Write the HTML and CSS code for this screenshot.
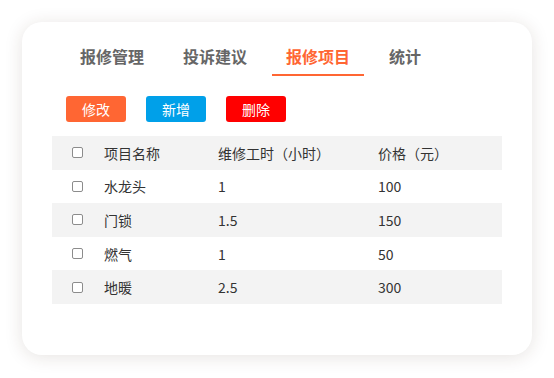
FILE: index.html
```html
<!DOCTYPE html>
<html>
<head>
    <title>报修项目</title>
    <link rel="stylesheet" href="styles.css">
</head>
<body>
    <div class="card">
        <div class="tabs">
            <span class="tab">报修管理</span>
            <span class="tab">投诉建议</span>
            <span class="tab active">报修项目</span>
            <span class="tab">统计</span>
        </div>

        <div class="actions">
            <button type="button" class="btn btn-edit">修改</button>
            <button type="button" class="btn btn-add">新增</button>
            <button type="button" class="btn btn-del">删除</button>
        </div>

        <div class="table">
            <div class="row head">
                <span class="cell"><i class="check"></i></span>
                <span class="cell">项目名称</span>
                <span class="cell">维修工时（小时）</span>
                <span class="cell">价格（元）</span>
            </div>
            <div class="row">
                <span class="cell"><i class="check"></i></span>
                <span class="cell">水龙头</span>
                <span class="cell">1</span>
                <span class="cell">100</span>
            </div>
            <div class="row">
                <span class="cell"><i class="check"></i></span>
                <span class="cell">门锁</span>
                <span class="cell">1.5</span>
                <span class="cell">150</span>
            </div>
            <div class="row">
                <span class="cell"><i class="check"></i></span>
                <span class="cell">燃气</span>
                <span class="cell">1</span>
                <span class="cell">50</span>
            </div>
            <div class="row">
                <span class="cell"><i class="check"></i></span>
                <span class="cell">地暖</span>
                <span class="cell">2.5</span>
                <span class="cell">300</span>
            </div>
        </div>
    </div>
</body>
</html>
```

FILE: styles.css
```css
body {
    font-family: "Noto Sans CJK SC", "Noto Sans", sans-serif;
    background-color: #fff;
    margin: 0;
    padding: 22px;
    color: #333;
}

.card {
    width: 450px;
    height: 319px;
    padding: 14px 30px 0;
    background-color: #fff;
    border-radius: 20px;
    box-shadow: 0 2px 18px rgba(60, 40, 20, 0.13);
}

.tabs {
    display: flex;
    padding-left: 14px;
}

.tab {
    height: 38px;
    line-height: 40px;
    padding: 0 14px;
    margin-right: 11px;
    font-size: 16px;
    font-weight: bold;
    color: #666;
    border-bottom: 2px solid transparent;
}

.tab.active {
    color: #ff6633;
    border-bottom-color: #ff6633;
}

.actions {
    display: flex;
    gap: 20px;
    margin: 20px 0 14px 14px;
}

.btn {
    width: 60px;
    height: 26px;
    padding: 0;
    border: none;
    border-radius: 3px;
    color: #fff;
    font-family: inherit;
    font-size: 14px;
    line-height: 26px;
}

.btn-edit { background-color: #ff6633; }
.btn-add { background-color: #00a0e9; }
.btn-del { background-color: #ff0000; }

.row {
    display: grid;
    grid-template-columns: 52px 114px 160px 1fr;
    align-items: center;
    height: 33.6px;
    font-size: 14px;
}

.row:nth-child(odd) {
    background-color: #f3f3f3;
}

.cell:first-child {
    padding-left: 20px;
    display: flex;
}

.check {
    display: block;
    width: 9px;
    height: 9px;
    border: 1px solid #8c8c8c;
    border-radius: 2px;
    background-color: #fff;
}
```
